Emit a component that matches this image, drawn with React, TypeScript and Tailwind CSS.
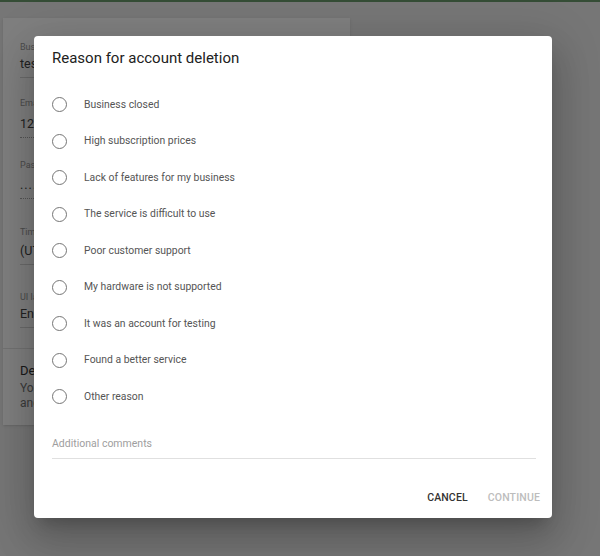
import React from "react";

const reasons = [
  "Business closed",
  "High subscription prices",
  "Lack of features for my business",
  "The service is difficult to use",
  "Poor customer support",
  "My hardware is not supported",
  "It was an account for testing",
  "Found a better service",
  "Other reason",
];

const Field = ({
  label,
  value,
  className,
  valueClass,
  dotted,
}: {
  label: string;
  value: string;
  className?: string;
  valueClass?: string;
  dotted?: boolean;
}) => (
  <div className={className}>
    <div className="text-[9px] leading-[12px] text-[#999]">{label}</div>
    <div
      className={`pb-[4px] text-[12.5px] leading-[18px] text-[#444] border-b ${valueClass} ${
        dotted ? "border-dotted border-[#aaa]" : "border-[#d6d6d6]"
      }`}
    >
      {value}
    </div>
  </div>
);

const Radio = () => (
  <span className="block w-[15px] h-[15px] rounded-full border-[1.5px] border-[#757575]" />
);

export default function App() {
  return (
    <div
      className="relative w-[600px] h-[556px] overflow-hidden bg-[#ececec]"
      style={{ fontFamily: "Roboto, 'Liberation Sans', sans-serif" }}
    >
      <div className="h-[2px] bg-[#6a9a6c]" />

      {/* page behind the dialog */}
      <div className="ml-[3px] mt-[16px] w-[347px] bg-white shadow-sm">
        <div className="pl-[17px] pr-[20px] pt-[23px] pb-[20px]">
          <Field
            label="Business name"
            value="test business"
            valueClass="mt-[2px]"
          />
          <Field
            label="Email"
            value="123@example.com"
            className="mt-[19px]"
            valueClass="mt-[6px]"
            dotted
          />
          <Field
            label="Password"
            value="........"
            className="mt-[21px]"
            valueClass="mt-[5px] tracking-[1px]"
            dotted
          />
          <Field
            label="Time zone"
            value="(UTC) Coordinated Universal Time"
            className="mt-[27px]"
            valueClass="mt-[4px]"
          />
          <Field
            label="UI language"
            value="English"
            className="mt-[26px]"
            valueClass="mt-[2px]"
          />
        </div>
        <div className="border-t border-[#e4e4e4] pl-[17px] pt-[14px] pb-[14px]">
          <div className="text-[13px] leading-[16px] text-[#333]">
            Delete account
          </div>
          <div className="mt-[2px] text-[12px] leading-[15px] text-[#777]">
            You can delete your account
            <br />
            and all associated data.
          </div>
        </div>
      </div>

      {/* overlay */}
      <div className="absolute inset-0 bg-black/50" />

      {/* dialog */}
      <div className="absolute left-[34px] top-[36px] w-[518px] h-[482px] rounded-[4px] bg-white shadow-[0_11px_15px_-7px_rgba(0,0,0,0.2),0_24px_38px_3px_rgba(0,0,0,0.14),0_9px_46px_8px_rgba(0,0,0,0.12)] flex flex-col">
        <div className="pl-[18px] pt-[12px] text-[15px] leading-[20px] text-[#212121]">
          Reason for account deletion
        </div>

        <div className="mt-[18.5px] flex flex-col">
          {reasons.map((r) => (
            <label
              key={r}
              className="h-[36.5px] flex items-center pl-[17.5px] cursor-pointer"
            >
              <Radio />
              <span className="ml-[17.5px] text-[10.4px] text-[#555]">{r}</span>
            </label>
          ))}
        </div>

        <div className="mt-[22px] ml-[18px] w-[484px] border-b border-[#e0e0e0] pb-[8px] text-[10.5px] leading-[13px] text-[#9e9e9e]">
          Additional comments
        </div>

        <div className="mt-auto mb-[14px] mr-[12px] flex justify-end gap-[20px] text-[10.5px] font-medium tracking-[0.15px] leading-[12px]">
          <span className="text-[#333]">CANCEL</span>
          <span className="text-[#bdbdbd]">CONTINUE</span>
        </div>
      </div>
    </div>
  );
}
